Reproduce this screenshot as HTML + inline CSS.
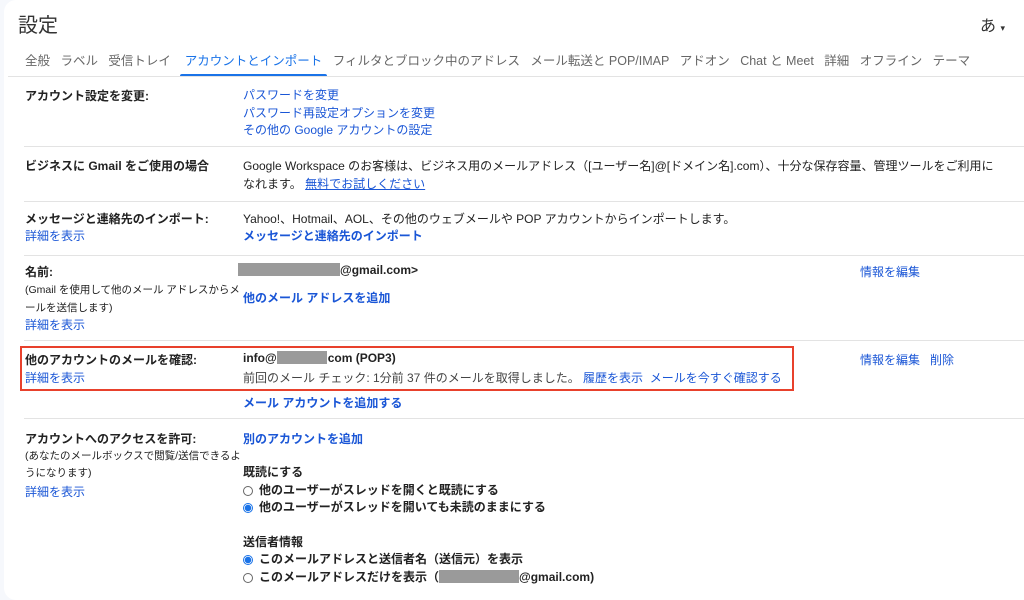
<!DOCTYPE html>
<html><head><meta charset="utf-8"><style>
body{margin:0;width:1024px;height:593px;background:#f6f8fc;overflow:hidden;font-family:"Liberation Sans","Noto Sans CJK JP",sans-serif;color:#222;font-size:12px}
.card{position:absolute;left:4px;top:0;width:1030px;height:600px;background:#fff;border-radius:12px}
.a{position:absolute;white-space:nowrap}
.b{font-weight:bold}
.l{color:#1a56d6}
.s{font-size:10.5px}
.hr{position:absolute;left:24px;width:1000px;height:1px;background:#e3e3e3}
.gray{display:inline-block;background:#9a9a9a;height:13px;vertical-align:-2px}
.rad{display:inline-block;width:10px;height:10px;border:1px solid #666;border-radius:50%;vertical-align:-2px;margin-right:6px;box-sizing:border-box}
.rad.on{border:1px solid #1a73e8;background:radial-gradient(#1a73e8 3px,#fff 3.5px)}
</style></head><body>
<div class="card"></div>
<div class="a" style="left:18px;top:9px;font-size:20px;color:#333">設定</div>
<div class="a" style="left:980px;top:12px;font-size:16px;color:#333">あ <span style="font-size:9px">▾</span></div>
<div class="a" style="left:25px;top:50px;font-size:12.5px;color:#666;word-spacing:0">
<span>全般</span>&nbsp;&nbsp;&nbsp;<span>ラベル</span>&nbsp;&nbsp;&nbsp;<span>受信トレイ</span>&nbsp;&nbsp;&nbsp;&nbsp;<span style="color:#1a73e8">アカウントとインポート</span>&nbsp;&nbsp;&nbsp;<span>フィルタとブロック中のアドレス</span>&nbsp;&nbsp;&nbsp;<span>メール転送と POP/IMAP</span>&nbsp;&nbsp;&nbsp;<span>アドオン</span>&nbsp;&nbsp;&nbsp;<span>Chat と Meet</span>&nbsp;&nbsp;&nbsp;<span>詳細</span>&nbsp;&nbsp;&nbsp;<span>オフライン</span>&nbsp;&nbsp;&nbsp;<span>テーマ</span></div>
<div class="a" style="left:180px;top:74px;width:147px;height:3px;background:#1a73e8;border-radius:2px 2px 0 0"></div>
<div class="hr" style="left:8px;top:76px;width:1016px"></div>

<div class="a b" style="left:25px;top:87px">アカウント設定を変更:</div>
<div class="a l" style="left:243px;top:87px;line-height:17.5px">パスワードを変更<br>パスワード再設定オプションを変更<br>その他の Google アカウントの設定</div>
<div class="hr" style="top:146px"></div>

<div class="a b" style="left:25px;top:157px">ビジネスに Gmail をご使用の場合</div>
<div class="a" style="left:243px;top:157px;line-height:18px">Google Workspace のお客様は、ビジネス用のメールアドレス（[ユーザー名]@[ドメイン名].com）、十分な保存容量、管理ツールをご利用に<br>なれます。 <span class="l" style="text-decoration:underline">無料でお試しください</span></div>
<div class="hr" style="top:201px"></div>

<div class="a b" style="left:25px;top:210px">メッセージと連絡先のインポート:</div>
<div class="a l" style="left:25px;top:227px">詳細を表示</div>
<div class="a" style="left:243px;top:210px">Yahoo!、Hotmail、AOL、その他のウェブメールや POP アカウントからインポートします。</div>
<div class="a l b" style="left:243px;top:227px">メッセージと連絡先のインポート</div>
<div class="hr" style="top:255px"></div>

<div class="a b" style="left:25px;top:263px">名前:</div>
<div class="a s" style="left:25px;top:281px;line-height:18px">(Gmail を使用して他のメール アドレスからメ<br>ールを送信します)</div>
<div class="a l" style="left:25px;top:316px">詳細を表示</div>
<div class="a b" style="left:238px;top:263px"><span class="gray" style="width:102px"></span>@gmail.com&gt;</div>
<div class="a l b" style="left:243px;top:289px">他のメール アドレスを追加</div>
<div class="a l" style="left:860px;top:263px">情報を編集</div>
<div class="hr" style="top:340px"></div>

<div class="a" style="left:20px;top:346px;width:770px;height:41px;border:2px solid #e8412c"></div>
<div class="a b" style="left:25px;top:351px">他のアカウントのメールを確認:</div>
<div class="a l" style="left:25px;top:369px">詳細を表示</div>
<div class="a b" style="left:243px;top:351px">info@<span class="gray" style="width:50px;margin-right:1px"></span>com (POP3)</div>
<div class="a" style="left:243px;top:369px;color:#444">前回のメール チェック: 1分前 37 件のメールを取得しました。 <span class="l">履歴を表示</span>&nbsp; <span class="l">メールを今すぐ確認する</span></div>
<div class="a l" style="left:860px;top:351px">情報を編集&nbsp;&nbsp; 削除</div>
<div class="a l b" style="left:243px;top:394px">メール アカウントを追加する</div>
<div class="hr" style="top:418px"></div>

<div class="a b" style="left:25px;top:430px">アカウントへのアクセスを許可:</div>
<div class="a s" style="left:25px;top:448px;line-height:17px">(あなたのメールボックスで閲覧/送信できるよ<br>うになります)</div>
<div class="a l" style="left:25px;top:483px">詳細を表示</div>
<div class="a l b" style="left:243px;top:430px">別のアカウントを追加</div>
<div class="a b" style="left:243px;top:463px">既読にする</div>
<div class="a b" style="left:243px;top:481px"><span class="rad"></span>他のユーザーがスレッドを開くと既読にする</div>
<div class="a b" style="left:243px;top:498px"><span class="rad on"></span>他のユーザーがスレッドを開いても未読のままにする</div>
<div class="a b" style="left:243px;top:533px">送信者情報</div>
<div class="a b" style="left:243px;top:550px"><span class="rad on"></span>このメールアドレスと送信者名（送信元）を表示</div>
<div class="a b" style="left:243px;top:568px"><span class="rad"></span>このメールアドレスだけを表示（<span class="gray" style="width:80px"></span>@gmail.com)</div>
</body></html>
